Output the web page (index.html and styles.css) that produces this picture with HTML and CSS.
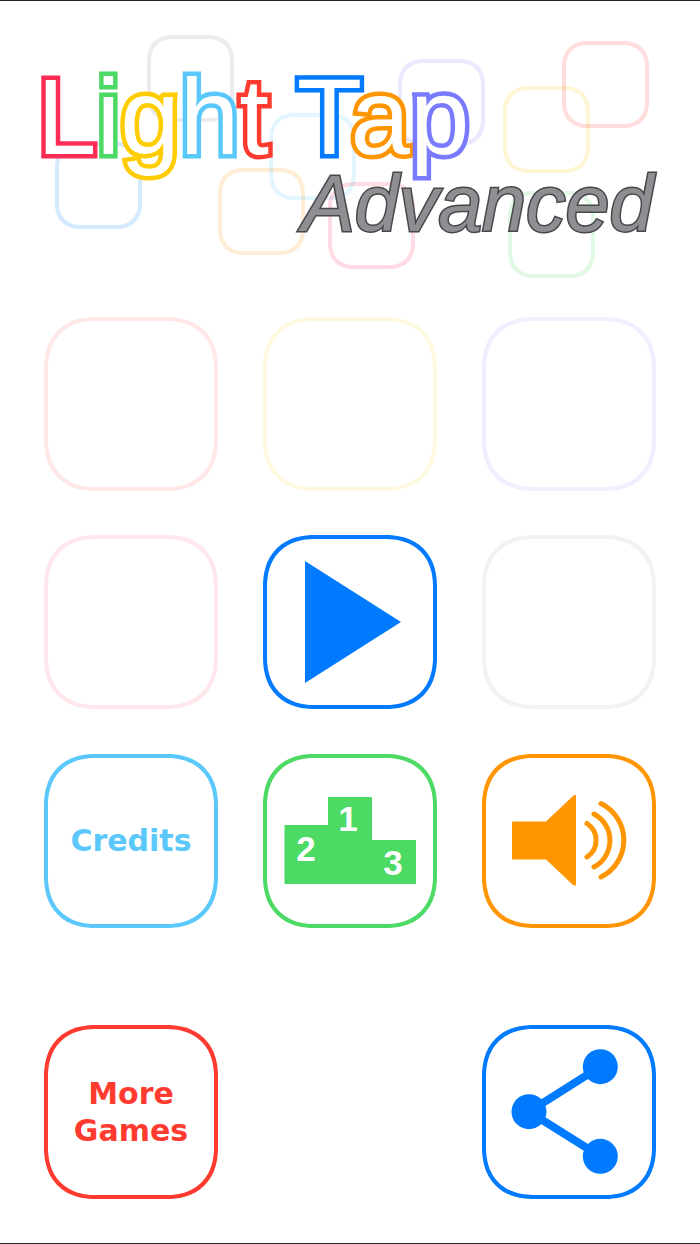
FILE: index.html
```html
<!DOCTYPE html>
<html lang="en">
<head>
<meta charset="utf-8">
<title>Light Tap Advanced</title>
<link rel="stylesheet" href="styles.css">
</head>
<body>
<main class="screen">
  <header class="logo">
    <span class="chip chip-gray"></span>
    <span class="chip chip-blue"></span>
    <span class="chip chip-orange"></span>
    <span class="chip chip-cyan"></span>
    <span class="chip chip-pink"></span>
    <span class="chip chip-purple"></span>
    <span class="chip chip-yellow"></span>
    <span class="chip chip-red"></span>
    <span class="chip chip-green"></span>
    <h1 class="title"><span class="c-pink">L</span><span class="c-green">i</span><span class="c-yellow">g</span><span class="c-cyan">h</span><span class="c-red">t</span> <span class="c-blue">T</span><span class="c-orange kern-a">a</span><span class="c-purple">p</span></h1>
    <p class="subtitle">Advanced</p>
  </header>
  <section class="grid">
    <div class="tile faded t-red"></div>
    <div class="tile faded t-yellow"></div>
    <div class="tile faded t-purple"></div>
    <div class="tile faded t-pink"></div>
    <button class="tile t-blue" aria-label="Play">
      <svg class="icon" viewBox="4 4 166 166"><path class="fill-blue" d="M42 26 138 87 42 148Z"/></svg>
    </button>
    <div class="tile faded t-gray"></div>
    <button class="tile t-cyan label">Credits</button>
    <button class="tile t-green" aria-label="Leaderboard">
      <svg class="icon" viewBox="4 4 166 166">
        <path class="fill-green" d="M21.500 71H65V43H109V86H153V130H21.500Z"/>
        <text class="rank" x="85" y="77">1</text>
        <text class="rank" x="43" y="107">2</text>
        <text class="rank" x="130" y="121">3</text>
      </svg>
    </button>
    <button class="tile t-orange" aria-label="Sound">
      <svg class="icon" viewBox="4 4 166 166">
        <path class="fill-orange" d="M31 67.500Q30 67.500 30 69V104Q30 105.500 31 105.500H64L91 131Q94 133 94 130V43Q94 39 91 42L64 67.500Z"/>
        <path class="wave" d="M105 69.500A20 20 0 0 1 105 103"/>
        <path class="wave" d="M112 60A30 30 0 0 1 112 113"/>
        <path class="wave" d="M119 49.500A41 41 0 0 1 119 123"/>
      </svg>
    </button>
    <button class="tile t-red label spaced">More Games</button>
    <button class="tile t-blue share" aria-label="Share">
      <svg class="icon" viewBox="4 4 166 166">
        <path class="link" d="M118.300 41.700 47 86.700 118.300 131.300"/>
        <circle class="fill-blue" cx="118.300" cy="41.700" r="17.500"/>
        <circle class="fill-blue" cx="47" cy="86.700" r="17.500"/>
        <circle class="fill-blue" cx="118.300" cy="131.300" r="17.500"/>
      </svg>
    </button>
  </section>
</main>
</body>
</html>
```

FILE: styles.css
```css
* { box-sizing: border-box; }

html, body { margin: 0; padding: 0; }

body { background: #fff; }

.screen {
  width: 700px;
  height: 1244px;
  border-top: 1px solid #222;
  border-bottom: 1px solid #222;
  overflow: hidden;
}

.logo {
  position: relative;
  height: 315.5px;
}

.chip {
  position: absolute;
  width: 87px;
  height: 87px;
  border: 4px solid;
  border-radius: 26px;
  corner-shape: superellipse(1.2);
  opacity: 0.16;
}

.chip-gray   { left: 147px; top: 34px;  color: #8e8e93; }
.chip-blue   { left: 55px;  top: 141px; color: #007aff; }
.chip-orange { left: 218px; top: 167px; color: #ff9500; }
.chip-cyan   { left: 269px; top: 112px; color: #5ac8fa; }
.chip-pink   { left: 328px; top: 181px; color: #ff2d55; }
.chip-purple { left: 398px; top: 58px;  color: #7a7aff; }
.chip-yellow { left: 503px; top: 85px;  color: #ffcc00; }
.chip-red    { left: 562px; top: 40px;  color: #ff3b30; }
.chip-green  { left: 508px; top: 190px; color: #4cd964; }

.title {
  position: absolute;
  left: 37px;
  top: 57.5px;
  margin: 0;
  font: 400 107px/116px "Liberation Sans", Arial, sans-serif;
  white-space: nowrap;
  color: #fff;
  -webkit-text-stroke-width: 9px;
  paint-order: stroke fill;
}

.kern-a { margin-left: -11.8px; }

.c-pink   { -webkit-text-stroke-color: #ff2d55; }
.c-green  { -webkit-text-stroke-color: #4cd964; }
.c-yellow { -webkit-text-stroke-color: #ffcc00; }
.c-cyan   { -webkit-text-stroke-color: #5ac8fa; }
.c-red    { -webkit-text-stroke-color: #ff3b30; }
.c-blue   { -webkit-text-stroke-color: #007aff; }
.c-orange { -webkit-text-stroke-color: #ff9500; }
.c-purple { -webkit-text-stroke-color: #7a7aff; }

.subtitle {
  position: absolute;
  left: 302px;
  top: 159px;
  margin: 0;
  font: italic 400 79px/88px "Liberation Sans", Arial, sans-serif;
  white-space: nowrap;
  color: #8e8e93;
  -webkit-text-stroke: 3px #48484a;
  paint-order: stroke fill;
}

.grid {
  display: grid;
  grid-template-columns: repeat(3, 174px);
  grid-template-rows: repeat(3, 174px) 174px;
  column-gap: 45px;
  row-gap: 44.5px;
  padding-left: 44px;
}

.tile {
  display: flex;
  align-items: center;
  justify-content: center;
  width: 174px;
  height: 174px;
  padding: 0;
  background: #fff;
  border: 4px solid;
  border-radius: 52px;
  corner-shape: superellipse(1.2);
}

.faded { opacity: 0.11; }

.t-red:nth-child(10) { margin-top: 52.5px; grid-column: 1; }
.share { grid-column: 3; margin-top: 52.5px; }

.t-red    { color: #ff3b30; }
.t-yellow { color: #ffcc00; }
.t-purple { color: #7a7aff; }
.t-pink   { color: #ff2d55; }
.t-blue   { color: #007aff; }
.t-gray   { color: #8e8e93; }
.t-cyan   { color: #5ac8fa; }
.t-green  { color: #4cd964; }
.t-orange { color: #ff9500; }

.label {
  font: 700 30px/37px "DejaVu Sans", Verdana, sans-serif;
  text-align: center;
}

.spaced { padding: 0 30px; }

.icon {
  display: block;
  width: 166px;
  height: 166px;
}

.fill-blue   { fill: #007aff; }
.fill-green  { fill: #4cd964; }
.fill-orange { fill: #ff9500; }

.wave {
  fill: none;
  stroke: #ff9500;
  stroke-width: 5px;
  stroke-linecap: round;
}

.link {
  fill: none;
  stroke: #007aff;
  stroke-width: 8px;
}

.rank {
  fill: #fff;
  font: 700 35px "Liberation Sans", Arial, sans-serif;
  text-anchor: middle;
}
```
